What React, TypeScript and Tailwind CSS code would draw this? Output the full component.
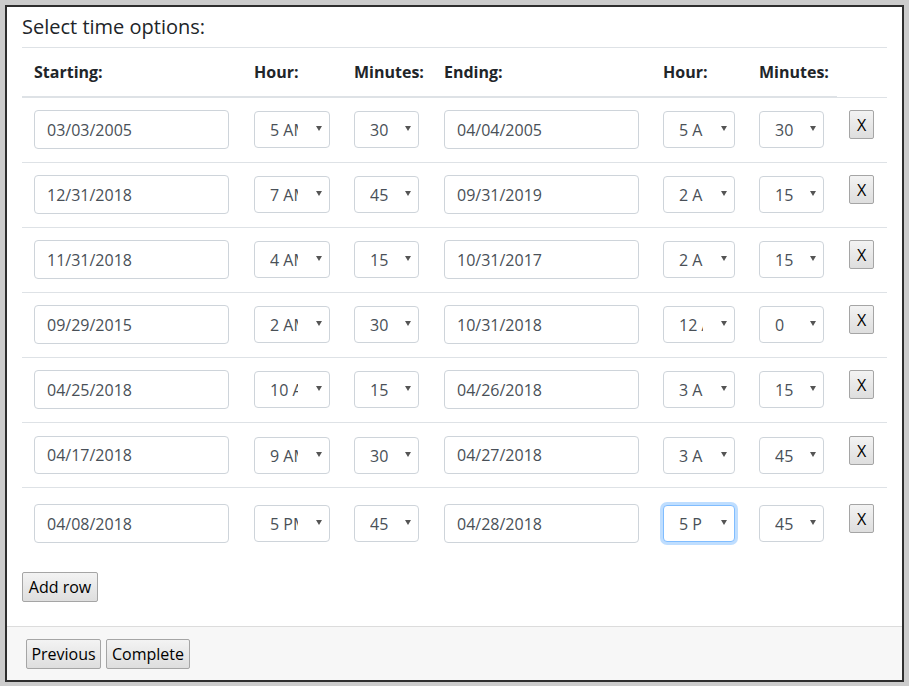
import React from "react";

type Row = {
  s: string;
  h1: string;
  m1: string;
  e: string;
  h2: string;
  m2: string;
  pt: string;
  ih: string;
  border: boolean;
  rh: string;
  focus?: boolean;
};

const rows: Row[] = [
  { s: "03/03/2005", h1: "5 AM", m1: "30", e: "04/04/2005", h2: "5 AM", m2: "30", pt: "pt-[12px]", ih: "h-[39px]", border: false, rh: "h-[64px]" },
  { s: "12/31/2018", h1: "7 AM", m1: "45", e: "09/31/2019", h2: "2 AM", m2: "15", pt: "pt-[12px]", ih: "h-[39px]", border: true, rh: "h-[65px]" },
  { s: "11/31/2018", h1: "4 AM", m1: "15", e: "10/31/2017", h2: "2 AM", m2: "15", pt: "pt-[12px]", ih: "h-[39px]", border: true, rh: "h-[65px]" },
  { s: "09/29/2015", h1: "2 AM", m1: "30", e: "10/31/2018", h2: "12 AM", m2: "0", pt: "pt-[12px]", ih: "h-[39px]", border: true, rh: "h-[65px]" },
  { s: "04/25/2018", h1: "10 AM", m1: "15", e: "04/26/2018", h2: "3 AM", m2: "15", pt: "pt-[12px]", ih: "h-[39px]", border: true, rh: "h-[65px]" },
  { s: "04/17/2018", h1: "9 AM", m1: "30", e: "04/27/2018", h2: "3 AM", m2: "45", pt: "pt-[13px]", ih: "h-[38px]", border: true, rh: "h-[65px]" },
  { s: "04/08/2018", h1: "5 PM", m1: "45", e: "04/28/2018", h2: "5 PM", m2: "45", pt: "pt-[16px]", ih: "h-[39px]", border: true, rh: "h-[68px]", focus: true },
];

function DateInput({ value, h }: { value: string; h: string }) {
  return (
    <div
      className={`w-[195px] ${h} border border-[#ced4da] rounded-[4px] bg-white px-[12px] flex items-center text-[16px] text-[#495057]`}
    >
      {value}
    </div>
  );
}

function Sel({
  value,
  w,
  textW,
  focus,
}: {
  value: string;
  w: string;
  textW: string;
  focus?: boolean;
}) {
  return (
    <div
      className={`relative ${w} h-[37px] mt-[1px] rounded-[4px] bg-white flex items-center pl-[15px] text-[16px] text-[#495057] ${
        focus
          ? "border border-[#80bdff] shadow-[0_0_0_3px_rgba(0,123,255,0.25)]"
          : "border border-[#ced4da]"
      }`}
    >
      <span className={`block shrink-0 ${textW} overflow-hidden whitespace-nowrap leading-[24px]`}>{value}</span>
      <svg
        className="absolute right-[7px] top-[14px]"
        width="6"
        height="5"
        viewBox="0 0 6 5"
      >
        <polygon points="0,0 6,0 3,5" fill="#555555" />
      </svg>
    </div>
  );
}

function Btn({ label, w, h }: { label: string; w: string; h: string }) {
  return (
    <div
      className={`${w} ${h} flex items-center justify-center border border-[#a5a5a5] rounded-[2px] bg-gradient-to-b from-[#f3f3f3] to-[#dedede] text-[16px] text-black leading-none`}
    >
      {label}
    </div>
  );
}

const cols = "grid grid-cols-[220px_100px_90px_219px_96px_90px_50px]";

export default function App() {
  return (
    <div
      className="w-[909px] h-[686px] bg-[#cccccc] pt-[5px] pl-[5px]"
      style={{ fontFamily: '"Open Sans", "Noto Sans", Arial, sans-serif' }}
    >
      <div className="w-[899px] h-[677px] border-2 border-[#2e2e2e] bg-white flex flex-col">
        <div className="h-[619px] px-[15px] pt-[8px]">
          <div className="h-[24px] leading-[24px] text-[20px] font-medium text-[#212529] mb-[8px]">
            Select time options:
          </div>
          <div className="w-[865px]">
            <div className={`${cols} h-[49px] border-t border-[#dee2e6] items-center text-[16px] font-bold text-[#212529]`}>
              <div className="pl-[12px]">Starting:</div>
              <div className="pl-[12px]">Hour:</div>
              <div className="pl-[12px]">Minutes:</div>
              <div className="pl-[12px]">Ending:</div>
              <div className="pl-[12px]">Hour:</div>
              <div className="pl-[12px]">Minutes:</div>
              <div />
            </div>
            <div className="flex">
              <div className="w-[815px] h-[2px] bg-[#dee2e6]" />
              <div className="w-[50px] h-[2px] border-b border-[#dee2e6]" />
            </div>
            {rows.map((r, i) => (
              <div
                key={i}
                className={`${cols} ${r.rh} ${r.pt} items-start ${r.border ? "border-t border-[#dee2e6]" : ""}`}
              >
                <div className="pl-[12px]">
                  <DateInput value={r.s} h={r.ih} />
                </div>
                <div className="pl-[12px]">
                  <Sel value={r.h1} w="w-[76px]" textW="w-[28px]" />
                </div>
                <div className="pl-[12px]">
                  <Sel value={r.m1} w="w-[65px]" textW="w-[22px]" />
                </div>
                <div className="pl-[12px]">
                  <DateInput value={r.e} h={r.ih} />
                </div>
                <div className="pl-[12px]">
                  <Sel value={r.h2} w="w-[72px]" textW="w-[24px]" focus={r.focus} />
                </div>
                <div className="pl-[12px]">
                  <Sel value={r.m2} w="w-[65px]" textW="w-[22px]" />
                </div>
                <div className="pl-[12px]">
                  <Btn label="X" w="w-[25px]" h="h-[29px]" />
                </div>
              </div>
            ))}
          </div>
          <div className="mt-[17px]">
            <Btn label="Add row" w="w-[76px]" h="h-[30px]" />
          </div>
        </div>
        <div className="flex-1 border-t border-[#dcdcdc] bg-[#f7f7f7] pt-[12px] pl-[19px] flex gap-[5px] items-start">
          <Btn label="Previous" w="w-[75px]" h="h-[30px]" />
          <Btn label="Complete" w="w-[84px]" h="h-[30px]" />
        </div>
      </div>
    </div>
  );
}
